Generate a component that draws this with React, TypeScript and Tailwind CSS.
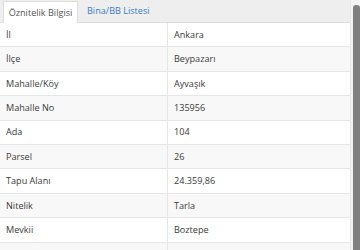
import React from "react";

const rows: [string, string][] = [
  ["İl", "Ankara"],
  ["İlçe", "Beypazarı"],
  ["Mahalle/Köy", "Ayvaşık"],
  ["Mahalle No", "135956"],
  ["Ada", "104"],
  ["Parsel", "26"],
  ["Tapu Alanı", "24.359,86"],
  ["Nitelik", "Tarla"],
  ["Mevkii", "Boztepe"],
  ["", ""],
];

export default function App() {
  return (
    <div
      className="w-[360px] h-[250px] flex overflow-hidden bg-white text-[9.1px] text-[#3a3a3a]"
      style={{ fontFamily: '"Open Sans", "Noto Sans", sans-serif' }}
    >
      <div className="w-[350px] flex flex-col">
        <div className="h-[23px] shrink-0 bg-[#eeeeee] border-b border-[#dddddd] flex items-end pl-[3px]">
          <div className="h-[22px] w-[75px] bg-white border-l border-r border-t border-[#dddddd] mb-[-1px] flex items-center justify-center text-[#555]">
            Öznitelik Bilgisi
          </div>
          <div className="h-[22px] flex items-center pl-[9px] text-[#3a7bc0]">
            Bina/BB Listesi
          </div>
        </div>
        {rows.map(([k, v], i) => (
          <div
            key={i}
            className={`h-[24.4px] shrink-0 flex border-b border-[#e6e6e6] ${
              i % 2 === 1 ? "bg-[#f8f8f8]" : "bg-white"
            }`}
          >
            <div className="w-[168px] border-r border-[#e6e6e6] flex items-center pl-[6px]">
              {k}
            </div>
            <div className="flex-1 flex items-center pl-[6px]">{v}</div>
          </div>
        ))}
      </div>
      <div className="w-[10px] flex bg-[#f3f3f3] border-l border-[#e8e8e8]">
        <div className="ml-[2px] w-[7px] mt-[5px] flex-1 bg-[#808080] rounded-t-[3px]" />
      </div>
    </div>
  );
}
